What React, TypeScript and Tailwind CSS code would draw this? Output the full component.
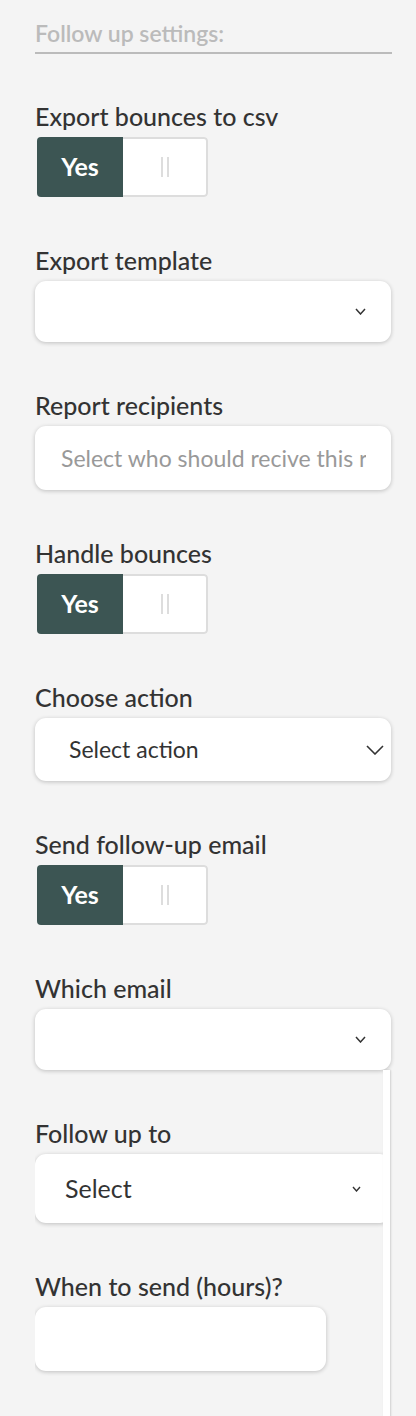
import type { ReactNode } from 'react';

const font = { fontFamily: 'Lato, "Open Sans", sans-serif' };

function Label({ children }: { children: ReactNode }) {
  return <div className="mb-[6px] text-[25px] font-medium leading-[30px] text-[#333]">{children}</div>;
}

function Toggle() {
  return (
    <div className="ml-[2px] flex h-[60px] w-[171px] overflow-hidden rounded-[4px]">
      <div className="flex w-[86px] items-center justify-center bg-[#3c5553] text-[25px] font-bold text-white">Yes</div>
      <div className="flex flex-1 items-center justify-center gap-[4px] rounded-r-[4px] border-2 border-l-0 border-[#ddd] bg-white">
        <span className="h-[20px] w-[2px] bg-[#ddd]" />
        <span className="h-[20px] w-[2px] bg-[#ddd]" />
      </div>
    </div>
  );
}

function Chevron({ size = 'sm' }: { size?: 'xs' | 'sm' | 'lg' }) {
  if (size === 'lg') {
    return (
      <svg width="18" height="10" viewBox="0 0 18 10" fill="none">
        <path d="M1 1l8 8 8-8" stroke="#333" strokeWidth="1.6" />
      </svg>
    );
  }
  if (size === 'xs') {
    return (
      <svg width="9" height="6" viewBox="0 0 9 6" fill="none">
        <path d="M1 1l3.5 4 3.5-4" stroke="#333" strokeWidth="1.4" />
      </svg>
    );
  }
  return (
    <svg width="11" height="7" viewBox="0 0 11 7" fill="none">
      <path d="M1 1l4.5 5 4.5-5" stroke="#333" strokeWidth="1.5" />
    </svg>
  );
}

function Box({ h, className = '', children }: { h: string; className?: string; children?: ReactNode }) {
  return (
    <div className={`flex shrink-0 items-center rounded-[11px] bg-white shadow-[0_1px_4px_rgba(0,0,0,0.22)] ${h} ${className}`}>
      {children}
    </div>
  );
}

export default function App() {
  return (
    <div className="min-h-[1416px] bg-[#f4f4f4] pl-[35px] pt-[19px]" style={font}>
      <div className="w-[357px] border-b-2 border-[#bbb] pb-[5px] text-[23px] font-semibold leading-[28px] text-[#bbb]">
        Follow up settings:
      </div>

      <div className="mt-[47px]">
        <Label>Export bounces to csv</Label>
        <Toggle />
      </div>

      <div className="mt-12 w-[356px]">
        <Label>Export template</Label>
        <Box h="h-[61px]" className="justify-end pr-[25px]">
          <Chevron />
        </Box>
      </div>

      <div className="mt-12 w-[356px]">
        <Label>Report recipients</Label>
        <Box h="h-[64px]" className="pl-[26px] pr-[25px]">
          <span className="min-w-0 overflow-hidden whitespace-nowrap text-[23px] text-[#999]">Select who should recive this report</span>
        </Box>
      </div>

      <div className="mt-12">
        <Label>Handle bounces</Label>
        <Toggle />
      </div>

      <div className="mt-12 w-[356px]">
        <Label>Choose action</Label>
        <Box h="h-[63px]" className="justify-between pl-[34px] pr-[7px]">
          <span className="text-[23px] text-[#333]">Select action</span>
          <Chevron size="lg" />
        </Box>
      </div>

      <div className="mt-12">
        <Label>Send follow-up email</Label>
        <Toggle />
      </div>

      <div className="mt-12 w-[356px]">
        <Label>Which email</Label>
        <Box h="h-[61px]" className="justify-end pr-[25px]">
          <Chevron />
        </Box>
      </div>

      <div className="flex">
        <div className="w-[348px] overflow-hidden pb-[60px]">
          <div className="mt-12 w-[356px]">
            <Label>Follow up to</Label>
            <Box h="h-[69px]" className="justify-between pl-[30px] pr-[30px]">
              <span className="text-[25px] text-[#333]">Select</span>
              <Chevron size="xs" />
            </Box>
          </div>

          <div className="mt-12">
            <Label>When to send (hours)?</Label>
            <Box h="h-[64px]" className="w-[291px]" />
          </div>
        </div>
        <div className="w-[7px] bg-white shadow-[1px_0_2px_rgba(0,0,0,0.15)]" />
      </div>
    </div>
  );
}
